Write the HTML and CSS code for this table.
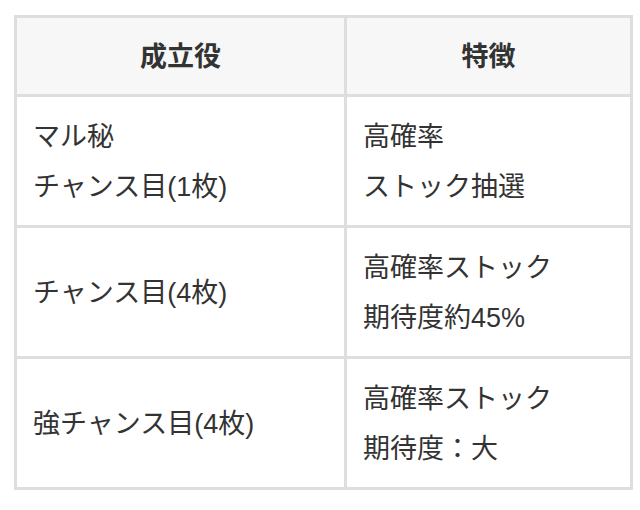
FILE: index.html
```html
<!DOCTYPE html>
<html lang="ja">
<head>
<meta charset="utf-8">
<link rel="stylesheet" href="styles.css">
</head>
<body>
<div class="table">
  <div class="cell head">成立役</div>
  <div class="cell head">特徴</div>
  <div class="cell">マル秘<br>チャンス目(1枚)</div>
  <div class="cell">高確率<br>ストック抽選</div>
  <div class="cell">チャンス目(4枚)</div>
  <div class="cell">高確率ストック<br>期待度約45%</div>
  <div class="cell">強チャンス目(4枚)</div>
  <div class="cell">高確率ストック<br>期待度：大</div>
</div>
</body>
</html>
```

FILE: styles.css
```css
html, body {
  margin: 0;
  padding: 0;
  background: #ffffff;
}
body {
  padding: 15px 0 0 14px;
  font-family: "Liberation Sans", "Noto Sans CJK JP", sans-serif;
  color: #333333;
}
.table {
  display: grid;
  grid-template-columns: 327px 283px;
  grid-template-rows: 76px 128px 128px 128px;
  gap: 3px;
  padding: 3px;
  background: #dedede;
  width: max-content;
}
.cell {
  background: #ffffff;
  font-size: 27px;
  line-height: 50px;
  padding: 2px 16px 0;
  display: flex;
  flex-direction: column;
  justify-content: center;
  align-items: flex-start;
}
.cell.head {
  background: #f7f7f7;
  font-weight: bold;
  align-items: center;
}
```
